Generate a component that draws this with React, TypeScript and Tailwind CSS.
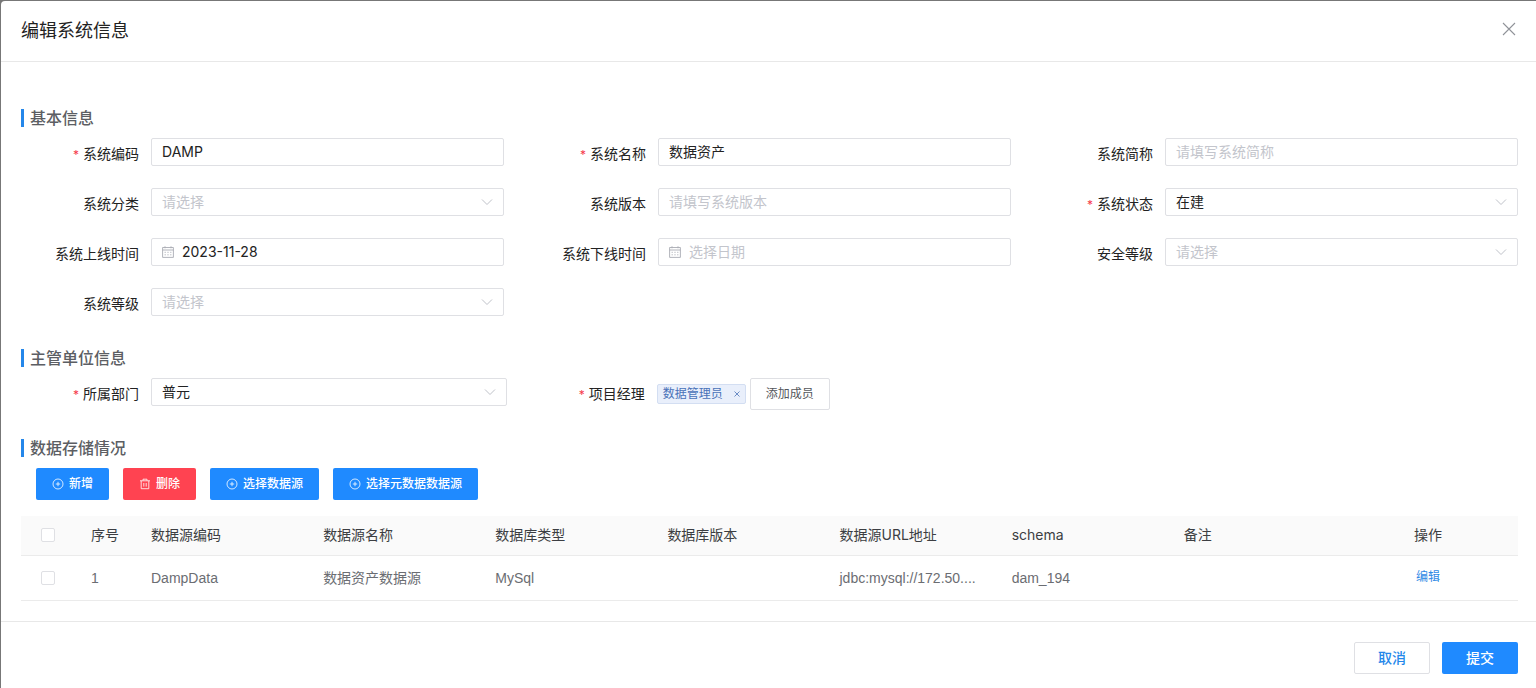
import { useId, useState } from "react";
import type { ReactNode } from "react";

interface FieldProps {
  label: string;
  required?: boolean;
  placeholder?: string;
  value?: string;
}

interface DataSource {
  code: string;
  name: string;
  dbType: string;
  version: string;
  url: string;
  schema: string;
  remark: string;
}

const SOURCES: DataSource[] = [
  {
    code: "DampData",
    name: "数据资产数据源",
    dbType: "MySql",
    version: "",
    url: "jdbc:mysql://172.50....",
    schema: "dam_194",
    remark: "",
  },
];

const COLUMNS = ["数据源编码", "数据源名称", "数据库类型", "数据库版本", "数据源URL地址", "schema", "备注"];

const CONTROL =
  "block h-7 w-full appearance-none rounded-xs border border-[#dfe0e4] bg-white px-2.5 text-sm text-[#222] outline-none placeholder:text-[#c3c5cc] focus:border-[#1f8aff]";

function PlusCircleIcon() {
  return (
    <svg className="size-3" viewBox="0 0 12 12" fill="none" stroke="currentColor" strokeWidth="0.8" aria-hidden="true">
      <circle cx="6" cy="6" r="5" />
      <path d="M6 3.8v4.4M3.8 6h4.4" />
    </svg>
  );
}

function TrashIcon() {
  return (
    <svg className="size-3" viewBox="0 0 12 12" fill="none" stroke="currentColor" strokeWidth="0.8" aria-hidden="true">
      <path d="M1 2.8h10M4 2.6V1.2h4v1.4M2.2 2.8v7.9h7.6V2.8M4.8 5v3.6M7.2 5v3.6" />
    </svg>
  );
}

function CalendarIcon() {
  return (
    <svg
      className="pointer-events-none absolute left-[11px] top-2 size-3"
      viewBox="0 0 12 12"
      fill="none"
      stroke="#a9acb3"
      strokeWidth="0.9"
      aria-hidden="true"
    >
      <path d="M0.6 1.5h10.8v9.9H0.6zM0.6 4h10.8M3 0.3v2M9 0.3v2" />
      <path d="M2.6 6.3h1.2M5.4 6.3h1.2M8.2 6.3h1.2M2.6 8.8h1.2M5.4 8.8h1.2M8.2 8.8h1.2" />
    </svg>
  );
}

function ChevronIcon() {
  return (
    <svg
      className="pointer-events-none absolute right-[11px] top-2 size-3"
      viewBox="0 0 12 12"
      fill="none"
      stroke="#bfc2c9"
      aria-hidden="true"
    >
      <path d="M1 3.5l5 5 5-5" />
    </svg>
  );
}

function FormItem({ id, label, required, children }: { id: string; label: string; required?: boolean; children: ReactNode }) {
  return (
    <div className="flex h-[50px] items-start">
      <label htmlFor={id} className="w-[130px] shrink-0 pr-3 text-right text-sm/8 text-[#222]">
        {required && <span className="mr-1 text-xs text-[#f5394b]">*</span>}
        {label}
      </label>
      {children}
    </div>
  );
}

function TextField({ label, required, placeholder, value }: FieldProps) {
  const id = useId();
  return (
    <FormItem id={id} label={label} required={required}>
      <input id={id} type="text" className={`${CONTROL} pb-0.5`} placeholder={placeholder} defaultValue={value} />
    </FormItem>
  );
}

function DateField({ label, required, value }: FieldProps) {
  const id = useId();
  return (
    <FormItem id={id} label={label} required={required}>
      <div className="relative flex-1">
        <CalendarIcon />
        <input id={id} type="text" className={`${CONTROL} pb-0.5 pl-[30px]`} placeholder="选择日期" defaultValue={value} />
      </div>
    </FormItem>
  );
}

function SelectField({ label, required, value }: FieldProps) {
  const id = useId();
  return (
    <FormItem id={id} label={label} required={required}>
      <div className="relative flex-1">
        <select id={id} className={`${CONTROL} ${value ? "" : "text-[#c3c5cc]!"}`} defaultValue={value ?? ""}>
          {value ? <option value={value}>{value}</option> : <option value="">请选择</option>}
        </select>
        <ChevronIcon />
      </div>
    </FormItem>
  );
}

function SectionTitle({ children }: { children: ReactNode }) {
  return (
    <div className="flex h-10 items-center gap-1.5">
      <span className="h-[18px] w-[3px] bg-[#2487ea]" />
      <h3 className="text-base font-medium text-[#5c5e63]">{children}</h3>
    </div>
  );
}

function ToolButton({ icon, danger, children }: { icon: ReactNode; danger?: boolean; children: ReactNode }) {
  return (
    <button
      type="button"
      className={`flex h-8 items-center gap-[5px] rounded-xs px-4 text-xs font-medium text-white ${
        danger ? "bg-[#ff4351]" : "bg-[#1f8aff]"
      }`}
    >
      {icon}
      {children}
    </button>
  );
}

function Checkbox({ label, checked, onChange }: { label: string; checked: boolean; onChange: () => void }) {
  return (
    <input
      type="checkbox"
      aria-label={label}
      checked={checked}
      onChange={onChange}
      className="ml-5 block size-3.5 appearance-none rounded-xs border border-[#dfe0e4] bg-white checked:border-[#1f8aff] checked:bg-[#1f8aff]"
    />
  );
}

export default function App() {
  const [selected, setSelected] = useState<string[]>([]);
  const [managers, setManagers] = useState<string[]>(["数据管理员"]);
  const allSelected = selected.length === SOURCES.length;

  function toggle(code: string): void {
    setSelected((prev) => (prev.includes(code) ? prev.filter((c) => c !== code) : [...prev, code]));
  }

  return (
    <div className="flex min-h-screen flex-col bg-[#777] pl-px pt-px font-['Inter','Noto_Sans_CJK_SC',sans-serif]">
      <div role="dialog" aria-label="编辑系统信息" className="flex flex-1 flex-col rounded-tl bg-white">
        <header className="flex h-[61px] items-center justify-between border-b border-[#e8e8e8] pb-1 pl-5 pr-5">
          <h2 className="pt-1 text-lg text-[#222]">编辑系统信息</h2>
          <button type="button" aria-label="关闭" className="text-[#909399]">
            <svg className="size-3.5" viewBox="0 0 14 14" fill="none" stroke="currentColor" strokeWidth="1.1">
              <path d="M1 1l12 12M13 1L1 13" />
            </svg>
          </button>
        </header>

        <main className="pb-5 pl-5 pr-[18px] pt-9">
          <SectionTitle>基本信息</SectionTitle>
          <div className="grid grid-cols-3 gap-x-6">
            <TextField label="系统编码" required value="DAMP" />
            <TextField label="系统名称" required value="数据资产" />
            <TextField label="系统简称" placeholder="请填写系统简称" />
            <SelectField label="系统分类" />
            <TextField label="系统版本" placeholder="请填写系统版本" />
            <SelectField label="系统状态" required value="在建" />
            <DateField label="系统上线时间" value="2023-11-28" />
            <DateField label="系统下线时间" />
            <SelectField label="安全等级" />
            <SelectField label="系统等级" />
          </div>

          <SectionTitle>主管单位信息</SectionTitle>
          <div className="grid grid-cols-3 gap-x-5">
            <SelectField label="所属部门" required value="普元" />
            <FormItem id="add-member" label="项目经理" required>
              <div className="flex items-center gap-1">
                {managers.map((name) => (
                  <span
                    key={name}
                    className="flex h-5 items-center gap-2 rounded-xs border border-[#d3def2] bg-[#e9effb] pl-[5px] pr-0.5 text-xs text-[#4a72b8]"
                  >
                    {name}
                    <button
                      type="button"
                      aria-label={`移除${name}`}
                      className="flex size-3 items-center justify-center"
                      onClick={() => setManagers(managers.filter((m) => m !== name))}
                    >
                      <svg className="size-1.5" viewBox="0 0 6 6" fill="none" stroke="currentColor" strokeWidth="0.8">
                        <path d="M0.5 0.5l5 5M5.5 0.5l-5 5" />
                      </svg>
                    </button>
                  </span>
                ))}
                <button
                  id="add-member"
                  type="button"
                  className="h-8 rounded-xs border border-[#dfe0e4] bg-white px-[15px] text-xs text-[#55575c]"
                >
                  添加成员
                </button>
              </div>
            </FormItem>
          </div>

          <SectionTitle>数据存储情况</SectionTitle>
          <div className="flex gap-3.5 pl-[15px]">
            <ToolButton icon={<PlusCircleIcon />}>新增</ToolButton>
            <ToolButton icon={<TrashIcon />} danger>
              删除
            </ToolButton>
            <ToolButton icon={<PlusCircleIcon />}>选择数据源</ToolButton>
            <ToolButton icon={<PlusCircleIcon />}>选择元数据数据源</ToolButton>
          </div>

          <table className="mt-4 w-full table-fixed text-left text-sm">
            <thead>
              <tr className="h-[39px] border-b border-[#ebebeb] bg-[#fafafa] text-[#3c3e42]">
                <th className="w-[55px]">
                  <Checkbox
                    label="全选"
                    checked={allSelected}
                    onChange={() => setSelected(allSelected ? [] : SOURCES.map((s) => s.code))}
                  />
                </th>
                <th className="w-[65px] pl-[15px] font-normal">序号</th>
                {COLUMNS.map((column) => (
                  <th key={column} className="px-2.5 font-normal">
                    {column}
                  </th>
                ))}
                <th className="pr-2 text-center font-normal">操作</th>
              </tr>
            </thead>
            <tbody className="font-['Liberation_Sans','Noto_Sans_CJK_SC',sans-serif]">
              {SOURCES.map((source, index) => (
                <tr key={source.code} className="h-[45px] border-b border-[#ebebeb] text-[#6b6d72]">
                  <td>
                    <Checkbox
                      label={`选择${source.name}`}
                      checked={selected.includes(source.code)}
                      onChange={() => toggle(source.code)}
                    />
                  </td>
                  <td className="pl-[15px]">{index + 1}</td>
                  <td className="px-2.5">{source.code}</td>
                  <td className="px-2.5">{source.name}</td>
                  <td className="px-2.5">{source.dbType}</td>
                  <td className="px-2.5">{source.version}</td>
                  <td className="whitespace-nowrap px-2.5">{source.url}</td>
                  <td className="px-2.5">{source.schema}</td>
                  <td className="px-2.5">{source.remark}</td>
                  <td className="pr-2 text-center">
                    <button type="button" className="block w-full pb-0.5 text-xs text-[#2f8ae5]">
                      编辑
                    </button>
                  </td>
                </tr>
              ))}
            </tbody>
          </table>
        </main>

        <footer className="flex justify-end gap-3 border-t border-[#e8e8e8] pr-[18px] pt-5 text-sm font-medium">
          <button type="button" className="h-8 w-[76px] rounded-xs border border-[#dfe0e4] bg-white text-[#2487ea]">
            取消
          </button>
          <button type="button" className="h-8 w-[76px] rounded-xs bg-[#1f8aff] text-white">
            提交
          </button>
        </footer>
      </div>
    </div>
  );
}
